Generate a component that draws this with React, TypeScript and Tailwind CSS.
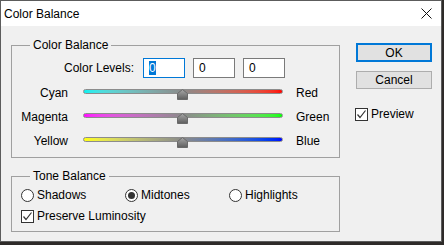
import type { ReactNode } from "react";

const FONT = { fontFamily: '"Liberation Sans", Arial, sans-serif' };

type SliderRow = {
  left: string;
  right: string;
  track: string;
};

const SLIDERS: SliderRow[] = [
  {
    left: "Cyan",
    right: "Red",
    track: "bg-linear-to-r from-[#00f0f0] via-[#8a8a8a] to-[#ff0000]",
  },
  {
    left: "Magenta",
    right: "Green",
    track: "bg-linear-to-r from-[#ff00ff] via-[#8a8a8a] to-[#00ff00]",
  },
  {
    left: "Yellow",
    right: "Blue",
    track: "bg-linear-to-r from-[#ffff00] via-[#8a8a8a] to-[#0000ff]",
  },
];

const Thumb = () => (
  <svg
    width="11"
    height="11"
    viewBox="0 0 11 11"
    className="absolute top-[0px] left-[94px]"
  >
    <defs>
      <linearGradient id="thumbFill" x1="0" y1="0" x2="0" y2="1">
        <stop offset="0" stopColor="#a8a8a8" />
        <stop offset="1" stopColor="#5e5e5e" />
      </linearGradient>
    </defs>
    <path
      d="M5.5 0.5 L10.5 4.5 L10.5 10.5 L0.5 10.5 L0.5 4.5 Z"
      fill="url(#thumbFill)"
      stroke="#6a6a6a"
      strokeWidth="1"
    />
  </svg>
);

const CheckBox = () => (
  <span className="flex h-[13px] w-[13px] items-center justify-center border border-[#333333] bg-white">
    <svg width="11" height="11" viewBox="0 0 11 11">
      <path d="M1.5 5.5 L4 8.5 L9.5 1.5" fill="none" stroke="#333333" strokeWidth="1.2" />
    </svg>
  </span>
);

const Radio = ({ checked }: { checked?: boolean }) => (
  <span className="flex h-[13px] w-[13px] items-center justify-center rounded-full border border-[#333333] bg-white">
    {checked ? <span className="h-[7px] w-[7px] rounded-full bg-[#333333]" /> : null}
  </span>
);

const GroupBox = ({
  title,
  className,
  children,
}: {
  title: string;
  className?: string;
  children: ReactNode;
}) => (
  <fieldset className={`border border-[#a0a0a0] ${className ?? ""}`}>
    <legend className="ml-[18px] px-[3px] text-[12px] leading-[14px]">{title}</legend>
    {children}
  </fieldset>
);

const LevelBox = ({ focused }: { focused?: boolean }) => (
  <div
    className={`flex h-[20px] w-[42px] items-center bg-white pl-[5px] text-[12px] ${
      focused ? "border border-[#0078d7]" : "border border-[#7a7a7a]"
    }`}
  >
    {focused ? (
      <span className="bg-[#0078d7] px-[0px] leading-[14px] text-white">0</span>
    ) : (
      <span className="leading-[14px]">0</span>
    )}
  </div>
);

export default function App() {
  return (
    <div className="h-[245px] w-[444px] bg-[#2e2b29] text-black" style={FONT}>
      <div className="h-[242px] w-[442px] border border-[#5c5c5c] bg-[#f0f0f0]">
        <div className="flex h-[25px] items-center justify-between bg-white pl-[3px] pr-[9px]">
          <span className="text-[12px] leading-[14px]">Color Balance</span>
          <svg width="11" height="11" viewBox="0 0 11 11">
            <path d="M0.5 0.5 L10.5 10.5 M10.5 0.5 L0.5 10.5" stroke="#111111" strokeWidth="1" />
          </svg>
        </div>

        <div className="flex pl-[10px]">
          <div className="w-[329px]">
            <GroupBox title="Color Balance" className="mt-[12px] pt-[6px] pb-[6px]">
              <div className="flex h-[20px] items-center">
                <span className="w-[122px] text-right text-[12px]">Color Levels:</span>
                <div className="ml-[9px] flex gap-[8px]">
                  <LevelBox focused />
                  <LevelBox />
                  <LevelBox />
                </div>
              </div>
              <div className="mt-[1px]">
                {SLIDERS.map((row) => (
                  <div key={row.left} className="flex h-[24px] items-center">
                    <span className="w-[56px] translate-y-[2px] text-right text-[12px]">{row.left}</span>
                    <div className="relative ml-[15px] h-[5px] w-[200px]">
                      <div className={`h-[5px] w-full rounded-full border border-[#8c8c8c] ${row.track}`} />
                      <Thumb />
                    </div>
                    <span className="ml-[13px] translate-y-[2px] text-[12px]">{row.right}</span>
                  </div>
                ))}
              </div>
            </GroupBox>

            <GroupBox title="Tone Balance" className="mt-[11px] pt-[5px] pb-[8px]">
              <div className="flex h-[14px] items-center pl-[9px] text-[12px]">
                <label className="flex w-[104px] items-center gap-[3px]">
                  <Radio />
                  Shadows
                </label>
                <label className="flex w-[104px] items-center gap-[3px]">
                  <Radio checked />
                  Midtones
                </label>
                <label className="flex items-center gap-[3px]">
                  <Radio />
                  Highlights
                </label>
              </div>
              <div className="mt-[7px] flex h-[14px] items-center gap-[3px] pl-[9px] text-[12px]">
                <CheckBox />
                Preserve Luminosity
              </div>
            </GroupBox>
          </div>

          <div className="ml-[16px] mt-[17px] flex flex-col">
            <button className="h-[19px] w-[76px] border-2 border-[#0078d7] bg-[#e1e1e1] text-[12px] leading-[14px]">
              OK
            </button>
            <button className="mt-[9px] h-[18px] w-[76px] border border-[#adadad] bg-[#e1e1e1] text-[12px] leading-[14px]">
              Cancel
            </button>
            <div className="ml-[-1px] mt-[16px] flex items-center gap-[3px] text-[12px]">
              <CheckBox />
              Preview
            </div>
          </div>
        </div>
      </div>
    </div>
  );
}
